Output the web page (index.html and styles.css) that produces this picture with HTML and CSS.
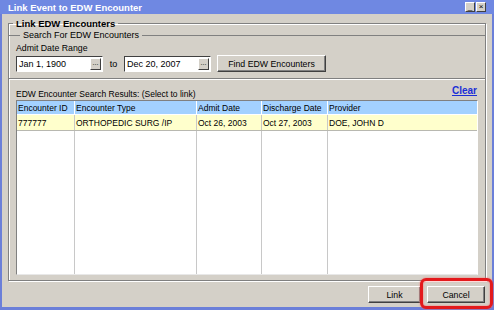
FILE: index.html
```html
<!DOCTYPE html>
<html lang="en">
<head>
    <meta charset="UTF-8" />
    <title>Link Event to EDW Encounter</title>
    <link rel="stylesheet" href="styles.css">
</head>
<body>
<div class="window">
    <div class="titlebar">
        <span class="title">Link Event to EDW Encounter</span>
        <span class="tb-btn min">_</span>
        <span class="tb-btn close">&#215;</span>
    </div>
    <div class="client">
        <fieldset class="outer">
            <legend class="outer-legend">Link EDW Encounters</legend>

            <fieldset class="search">
                <legend>Search For EDW Encounters</legend>
                <div class="field-label">Admit Date Range</div>
                <div class="date-row">
                    <div class="date-box"><span class="date-text">Jan 1, 1900</span><span class="dots">...</span></div>
                    <span class="to">to</span>
                    <div class="date-box"><span class="date-text">Dec 20, 2007</span><span class="dots">...</span></div>
                    <button class="btn find">Find EDW Encounters</button>
                </div>
            </fieldset>

            <div class="results">
                <div class="results-head">
                    <span>EDW Encounter Search Results: (Select to link)</span>
                    <a class="clear" href="#">Clear</a>
                </div>
                <div class="grid">
                    <div class="row head">
                        <div class="c1">Encounter ID</div>
                        <div class="c2">Encounter Type</div>
                        <div class="c3">Admit Date</div>
                        <div class="c4">Discharge Date</div>
                        <div class="c5">Provider</div>
                    </div>
                    <div class="row sel">
                        <div class="c1">777777</div>
                        <div class="c2">ORTHOPEDIC SURG /IP</div>
                        <div class="c3">Oct 26, 2003</div>
                        <div class="c4">Oct 27, 2003</div>
                        <div class="c5">DOE, JOHN D</div>
                    </div>
                    <div class="row filler">
                        <div class="c1"></div>
                        <div class="c2"></div>
                        <div class="c3"></div>
                        <div class="c4"></div>
                        <div class="c5"></div>
                    </div>
                </div>
            </div>
        </fieldset>

        <div class="actions">
            <button class="btn act">Link</button>
            <div class="cancel-wrap">
                <button class="btn act">Cancel</button>
                <span class="highlight"></span>
            </div>
        </div>
    </div>
</div>
</body>
</html>
```

FILE: styles.css
```css
html, body {
    margin: 0;
    padding: 0;
}

body {
    font-family: "Liberation Sans", Arial, sans-serif;
    font-size: 8.5px;
    color: #000;
    background: #d4d0c8;
}

.window {
    width: 494px;
    height: 310px;
    box-sizing: border-box;
    border-left: 2px solid #6b7fd9;
    border-right: 2px solid #6b7fd9;
    border-bottom: 3px solid #6b7fd9;
    background: #d4d0c8;
    display: flex;
    flex-direction: column;
}

/* Title bar */
.titlebar {
    height: 14px;
    background: #6f88e2;
    display: flex;
    align-items: center;
    padding: 0 8px 0 8px;
    margin: 0 -2px;
}

.title {
    color: #fff;
    font-weight: bold;
    font-size: 9.5px;
    flex: 1;
    padding-top: 1px;
}

.tb-btn {
    width: 8px;
    height: 8px;
    background: #d4d0c8;
    border: 1px solid #fff;
    border-right-color: #404040;
    border-bottom-color: #404040;
    font-size: 8px;
    line-height: 7px;
    text-align: center;
    color: #000;
    margin-left: 1px;
    overflow: hidden;
}

.client {
    flex: 1;
    padding: 4px 6px 0 6px;
    display: flex;
    flex-direction: column;
}

/* Group boxes */
.outer {
    margin: 0;
    padding: 0 0 8px 0;
    border: 1px solid #808080;
    box-shadow: inset 1px 1px 0 #fff, 1px 1px 0 #fff;
    height: 263px;
    box-sizing: border-box;
}

.outer-legend {
    font-weight: bold;
    font-size: 9.5px;
    padding: 0 3px;
    margin-left: 4px;
}

.search {
    margin: 1px 0 0 0;
    padding: 0 0 6px 7px;
    border: none;
    border-top: 1px solid #808080;
    border-bottom: 1px solid #808080;
    box-shadow: 0 1px 0 #fff;
}

.search legend {
    padding: 0 3px;
    margin-left: 4px;
    font-size: 9px;
}

.field-label {
    margin: 3px 0 2px 0;
    font-size: 8.75px;
}

.date-row {
    display: flex;
    align-items: center;
}

.date-box {
    width: 87px;
    height: 16px;
    box-sizing: border-box;
    background: #fff;
    border: 1px solid #404040;
    border-right-color: #fff;
    border-bottom-color: #fff;
    display: flex;
    align-items: center;
    padding: 0 1px 0 2px;
}

.date-text {
    flex: 1;
    font-size: 9px;
}

.dots {
    width: 11px;
    height: 12px;
    box-sizing: border-box;
    background: #d4d0c8;
    border: 1px solid #fff;
    border-right-color: #404040;
    border-bottom-color: #404040;
    font-size: 7px;
    line-height: 8px;
    text-align: center;
}

.to {
    width: 21px;
    text-align: center;
    font-size: 9px;
}

.btn {
    font-family: "Liberation Sans", Arial, sans-serif;
    font-size: 8.75px;
    background: #d4d0c8;
    color: #000;
    border: 1px solid #fff;
    border-right-color: #404040;
    border-bottom-color: #404040;
    box-shadow: inset -1px -1px 0 #808080;
    padding: 0;
    height: 17px;
}

.find {
    width: 109px;
    margin-left: 6px;
}

/* Results */
.results {
    padding: 6px 7px 0 7px;
}

.results-head {
    display: flex;
    justify-content: space-between;
    align-items: flex-end;
    height: 15px;
    padding-right: 1px;
}

.results-head span {
    margin-bottom: 1px;
}

.clear {
    color: #1b2fd6;
    font-weight: bold;
    font-size: 10px;
    text-decoration: underline;
    margin-bottom: 4px;
}

.grid {
    height: 173px;
    background: #fff;
    border: 1px solid #808080;
    border-right-color: #fff;
    border-bottom-color: #e8e8e8;
    display: flex;
    flex-direction: column;
}

.row {
    display: grid;
    grid-template-columns: 58px 122px 65px 66px 1fr;
    font-size: 8.5px;
}

.row > div {
    border-right: 1px solid #c8c8c8;
    padding-left: 1px;
    white-space: nowrap;
    overflow: hidden;
}

.row > div.c5 {
    border-right: none;
}

.head {
    background: #a3d1ff;
    height: 13px;
    line-height: 14px;
    border-bottom: 1px solid #fff;
}

.head > div {
    border-right-color: #fff;
}

.sel {
    background: #ffffcc;
    height: 15px;
    line-height: 16px;
    border-bottom: 1px solid #b8b8b0;
}

.filler {
    flex: 1;
}

/* Bottom buttons */
.actions {
    display: flex;
    justify-content: flex-end;
    align-items: center;
    padding: 5px 1px 0 0;
    gap: 6px;
}

.act {
    width: 53px;
}

.cancel-wrap {
    position: relative;
}

.cancel-wrap .act {
    width: 58px;
}

.highlight {
    position: absolute;
    left: -7px;
    top: -8px;
    right: -8px;
    bottom: -6px;
    border: 3px solid #e3191c;
    border-radius: 6px;
    box-shadow: 0 0 2px #ff6a6a, inset 0 0 2px #ff6a6a;
}
```
